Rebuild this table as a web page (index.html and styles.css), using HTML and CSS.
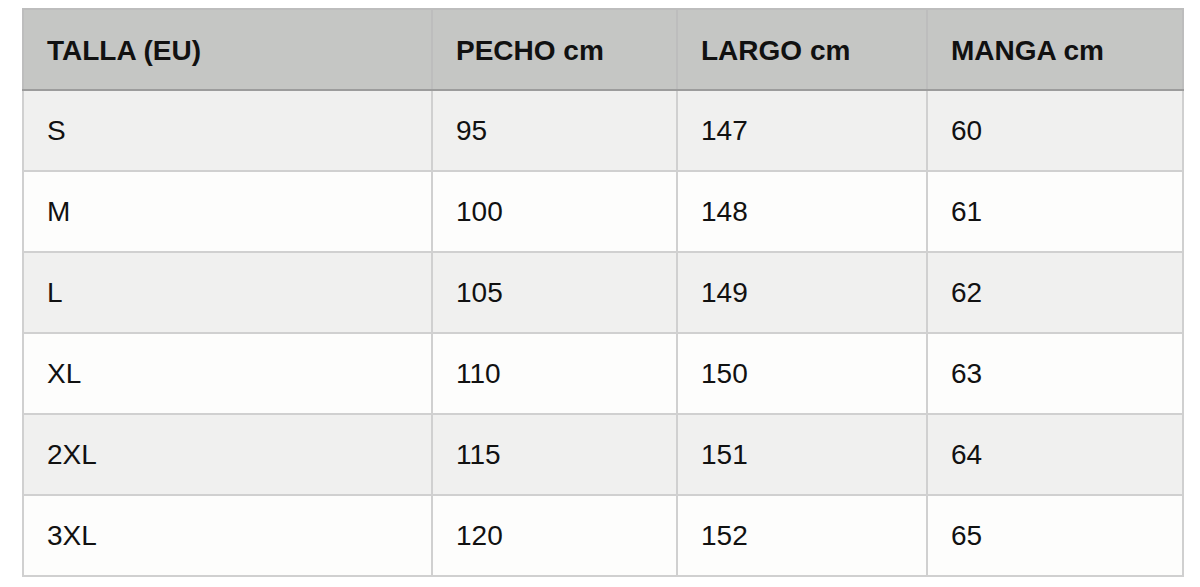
FILE: index.html
```html
<!DOCTYPE html>
<html lang="es">
<head>
<meta charset="utf-8">
<title>Tabla de tallas</title>
<link rel="stylesheet" href="styles.css">
</head>
<body>
<div class="wrap">
<table class="sizes">
<colgroup>
<col class="c1"><col class="c2"><col class="c3"><col class="c4">
</colgroup>
<thead>
<tr><th>TALLA (EU)</th><th>PECHO cm</th><th>LARGO cm</th><th>MANGA cm</th></tr>
</thead>
<tbody>
<tr class="alt"><td>S</td><td>95</td><td>147</td><td>60</td></tr>
<tr><td>M</td><td>100</td><td>148</td><td>61</td></tr>
<tr class="alt"><td>L</td><td>105</td><td>149</td><td>62</td></tr>
<tr><td>XL</td><td>110</td><td>150</td><td>63</td></tr>
<tr class="alt"><td>2XL</td><td>115</td><td>151</td><td>64</td></tr>
<tr><td>3XL</td><td>120</td><td>152</td><td>65</td></tr>
</tbody>
</table>
</div>
</body>
</html>
```
FILE: styles.css
```css
html, body {
  margin: 0;
  background: #ffffff;
}
.wrap {
  padding: 8px 0 0 22px;
}
.sizes {
  border-collapse: collapse;
  width: 1160px;
  table-layout: fixed;
  font-family: "Liberation Sans", Arial, sans-serif;
  font-size: 28px;
  color: #111111;
}
.c1 { width: 409px; }
.c2 { width: 245px; }
.c3 { width: 250px; }
.c4 { width: 256px; }
.sizes th, .sizes td {
  border: 2px solid #d0d0d0;
  text-align: left;
  padding: 0 0 0 23px;
  height: 81px;
  box-sizing: border-box;
  vertical-align: middle;
}
.sizes th {
  background: #c5c6c4;
  font-weight: bold;
  border-color: #bdbdbd;
  border-bottom: 2px solid #9c9c9c;
  padding-top: 2px;
}
.sizes td {
  background: #fdfdfc;
}
.sizes tr.alt td {
  background: #f0f0ef;
}
```
